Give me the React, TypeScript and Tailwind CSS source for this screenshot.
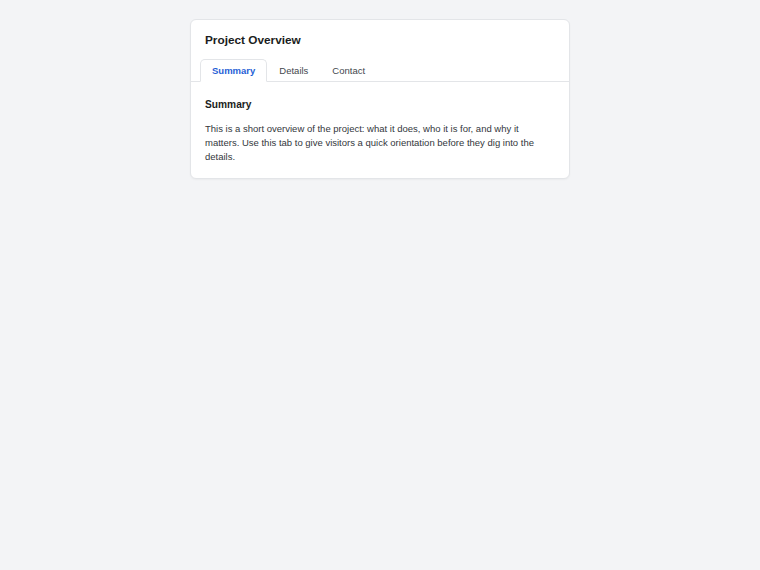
import React, { useState } from "react";

const tabs = [
  {
    id: "summary",
    label: "Summary",
    heading: "Summary",
    body: "This is a short overview of the project: what it does, who it is for, and why it matters. Use this tab to give visitors a quick orientation before they dig into the details.",
  },
  {
    id: "details",
    label: "Details",
    heading: "Details",
    body: "Technical notes, requirements and the structure of the project live here.",
  },
  {
    id: "contact",
    label: "Contact",
    heading: "Contact",
    body: "Reach the maintainers through the project's issue tracker or mailing list.",
  },
];

export default function App() {
  const [active, setActive] = useState("summary");
  const current = tabs.find((t) => t.id === active) ?? tabs[0];

  return (
    <div
      className="min-h-[570px] w-full bg-[#f3f4f6] pt-[19px]"
      style={{ fontFamily: '"Liberation Sans", Arial, sans-serif' }}
    >
      <div className="mx-auto w-[380px] overflow-hidden rounded-[6px] border border-[#e3e5e8] bg-white shadow-[0_1px_2px_rgba(0,0,0,0.04)]">
        <div className="px-[14px] pt-[12px] pb-[11px]">
          <h1 className="text-[11.8px] leading-[16px] font-bold text-[#1a1d21]">
            Project Overview
          </h1>
        </div>

        <div className="flex border-b border-[#e3e5e8] px-[9px]" role="tablist">
          {tabs.map((t) => {
            const isActive = t.id === active;
            return (
              <button
                key={t.id}
                role="tab"
                aria-selected={isActive}
                onClick={() => setActive(t.id)}
                className={
                  isActive
                    ? "-mb-px rounded-t-[5px] border border-[#e3e5e8] border-b-white bg-white px-[11px] py-[4px] text-[9.5px] leading-[13px] font-bold text-[#1f5fd6]"
                    : "-mb-px rounded-t-[5px] border border-transparent px-[11px] py-[4px] text-[9.5px] leading-[13px] text-[#43474e]"
                }
              >
                {t.label}
              </button>
            );
          })}
        </div>

        <div className="px-[14px] pt-[15px] pb-[14px]">
          <h2 className="mb-[10px] text-[10.2px] leading-[15px] font-bold text-[#1a1d21]">
            {current.heading}
          </h2>
          <p className="text-[9.5px] leading-[14px] text-[#33373c]">{current.body}</p>
        </div>
      </div>
    </div>
  );
}
